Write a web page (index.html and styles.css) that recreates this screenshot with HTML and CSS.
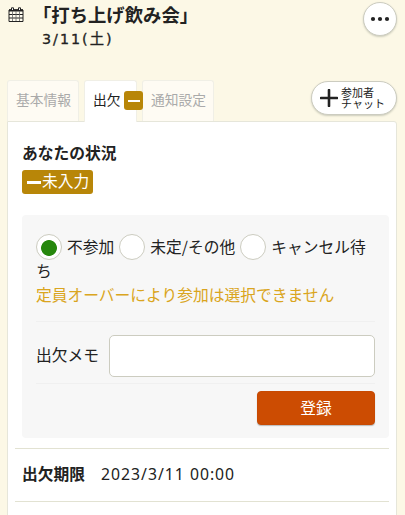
FILE: index.html
```html
<!DOCTYPE html>
<html lang="ja">
<head>
    <meta charset="UTF-8">
    <meta name="viewport" content="width=device-width, initial-scale=1.0">
    <title>打ち上げ飲み会</title>
    <link rel="stylesheet" href="styles.css">
</head>
<body>

<header class="event-header">
    <svg class="calendar" width="16" height="16" viewBox="0 0 16 16">
        <path d="M1 3h14v11.500H1z" fill="#fffdf0" stroke="#222"/>
        <path d="M1 3h14M1 7.500h14M1 11h14" fill="none" stroke="#222" stroke-width="1.200"/>
        <path d="M1 3.500h14" stroke="#222" stroke-width="2"/>
        <path d="M4.500 4v10M8 4v10M11.500 4v10" stroke="#666" stroke-width=".8"/>
        <path d="M3.500 3V.8h2V3M10.500 3V.8h2V3" fill="#fff" stroke="#222"/>
    </svg>
    <div class="event-name">
        <h1>「打ち上げ飲み会」</h1>
        <p class="event-date">3/11(土)</p>
    </div>
    <button class="menu-button" aria-label="メニュー">
        <svg width="20" height="6" viewBox="0 0 20 6" fill="#222">
            <circle cx="3" cy="3" r="2.1"/>
            <circle cx="10" cy="3" r="2.1"/>
            <circle cx="17" cy="3" r="2.1"/>
        </svg>
    </button>
</header>

<nav class="tab-bar">
    <a class="tab">基本情報</a>
    <a class="tab active">出欠<span class="tab-mark"><i></i></span></a>
    <a class="tab">通知設定</a>
    <button class="chat-button">
        <svg width="18" height="18" viewBox="0 0 18 18">
            <path d="M1 9h16M9 1v16" stroke="#222" stroke-width="2.6" stroke-linecap="round"/>
        </svg>
        <span>参加者<br>チャット</span>
    </button>
</nav>

<main class="panel">
    <h2>あなたの状況</h2>
    <div class="status"><i></i>未入力</div>

    <form class="answer">
        <div class="choices">
            <label><input type="radio" name="answer" checked>不参加</label>
            <label><input type="radio" name="answer">未定/その他</label>
            <label><input type="radio" name="answer">キャンセル待ち</label>
        </div>
        <p class="notice">定員オーバーにより参加は選択できません</p>
        <div class="memo">
            <label for="memo">出欠メモ</label>
            <input type="text" id="memo">
        </div>
        <div class="actions">
            <button type="button" class="submit">登録</button>
        </div>
    </form>

    <div class="limit">
        <b>出欠期限</b><span>2023/3/11 00:00</span>
    </div>
</main>

</body>
</html>
```

FILE: styles.css
```css
* {
    box-sizing: border-box;
}

body {
    margin: 0;
    height: 515px;
    overflow: hidden;
    background-color: #fcf8e6;
    color: #222;
    font-family: "Noto Sans CJK JP", sans-serif;
    font-size: 15.75px;
    line-height: 24px;
}

h1, h2, p {
    margin: 0;
}

button {
    padding: 0;
    font-family: inherit;
    color: inherit;
}

/* Cabecera del evento */
.event-header {
    display: flex;
    height: 80px;
    padding: 2px 8px 0;
}

.calendar {
    margin-top: 5px;
}

.event-name {
    flex: 1;
    margin-left: 9px;
}

h1 {
    font-size: 18.35px;
    line-height: 25px;
}

.event-date {
    padding-left: 9px;
    font-family: "DejaVu Sans", "Noto Sans CJK JP", sans-serif;
    font-size: 14.3px;
    line-height: 24px;
    letter-spacing: 2px;
    -webkit-text-stroke: 0.3px #222;
}

.menu-button {
    display: flex;
    align-items: center;
    justify-content: center;
    width: 34px;
    height: 34px;
    border: 1px solid #ccccc0;
    border-radius: 50%;
    background-color: #fff;
    box-shadow: 0 1px 2px #ccccbb;
}

/* Tabs */
.tab-bar {
    display: flex;
    align-items: flex-start;
    height: 41px;
    padding: 0 8px 0 7px;
}

.tab {
    width: 72px;
    height: 41px;
    margin-right: 5px;
    padding: 0 8px;
    border: 1px solid #f0efe6;
    border-bottom: none;
    border-radius: 3px 3px 0 0;
    background-color: #fefbf3;
    color: #aaa;
    font-size: 13.75px;
    line-height: 37px;
    white-space: nowrap;
}

.tab.active {
    position: relative;
    width: 53px;
    height: 42px;
    background-color: #fff;
    color: #222;
}

.tab-mark {
    position: absolute;
    left: 39px;
    top: 10px;
    display: flex;
    align-items: center;
    justify-content: center;
    width: 19px;
    height: 19px;
    border-radius: 3px;
    background-color: #b88608;
}

.tab-mark i {
    width: 12px;
    height: 2px;
    background-color: #fff;
}

.chat-button {
    display: flex;
    align-items: center;
    width: 86px;
    height: 34px;
    margin: 1px 0 0 auto;
    padding-left: 8px;
    border: 1px solid #ccccc0;
    border-radius: 17px;
    background-color: #fff;
    box-shadow: 0 1px 2px #ccccbb;
    font-size: 11px;
    line-height: 11px;
    text-align: left;
    white-space: nowrap;
}

.chat-button span {
    margin-left: 3px;
}

/* Panel */
.panel {
    width: 390px;
    height: 400px;
    margin-left: 7px;
    padding: 19px 7px 0;
    border: 1px solid #e6e6da;
    border-radius: 0 3px 0 0;
    background-color: #fff;
}

h2 {
    padding-left: 7px;
    font-size: 15.75px;
    line-height: 24px;
}

.status {
    display: flex;
    align-items: center;
    width: 71px;
    height: 24px;
    margin: 5px 0 0 7px;
    padding: 0 0 2px 5px;
    border-radius: 3px;
    background-color: #b88608;
    color: #fff;
    line-height: 20px;
}

.status i {
    width: 14px;
    height: 3px;
    margin: 2px 1px 0 0;
    background-color: #fff;
}

.answer {
    width: 367px;
    height: 223px;
    margin: 21px 0 10px 7px;
    padding: 20px 14px 0;
    border-radius: 4px;
    background-color: #f7f7f7;
}

.choices label {
    margin-right: 1.5px;
}

.choices input {
    appearance: none;
    width: 26px;
    height: 26px;
    margin: -2px 5px -2px 0;
    border: 1px solid #ccccc0;
    border-radius: 50%;
    background-color: #fff;
    vertical-align: -5px;
}

.choices input:checked {
    background: radial-gradient(circle at 12px 13px, #26870d 7.5px, #fff 8.3px);
}

.notice {
    color: #daa520;
}

.memo {
    display: flex;
    align-items: center;
    height: 63px;
    margin-top: 14px;
    border-top: 1px solid #f0f0f0;
    border-bottom: 1px solid #f0f0f0;
}

.memo label {
    margin-top: 5px;
}

.memo input {
    flex: 1;
    min-width: 0;
    height: 42px;
    margin: 7px 0 0 10px;
    border: 1px solid #ccccc0;
    border-radius: 5px;
    background-color: #fff;
}

.actions {
    display: flex;
    justify-content: flex-end;
    padding-top: 7px;
}

.submit {
    width: 118px;
    height: 34px;
    padding-bottom: 2px;
    border: 1px solid #c84a02;
    border-radius: 4px;
    background-color: #cc4c02;
    box-shadow: 0 1px 1px #bbb;
    color: #fff;
    font-size: 15.75px;
}

.limit {
    display: flex;
    height: 54px;
    padding-left: 7px;
    border-top: 1px solid #e2e2d2;
    border-bottom: 1px solid #e2e2d2;
    line-height: 50px;
}

.limit span {
    margin-left: 16px;
    font-family: "Noto Sans", sans-serif;
    letter-spacing: 1px;
}
```
